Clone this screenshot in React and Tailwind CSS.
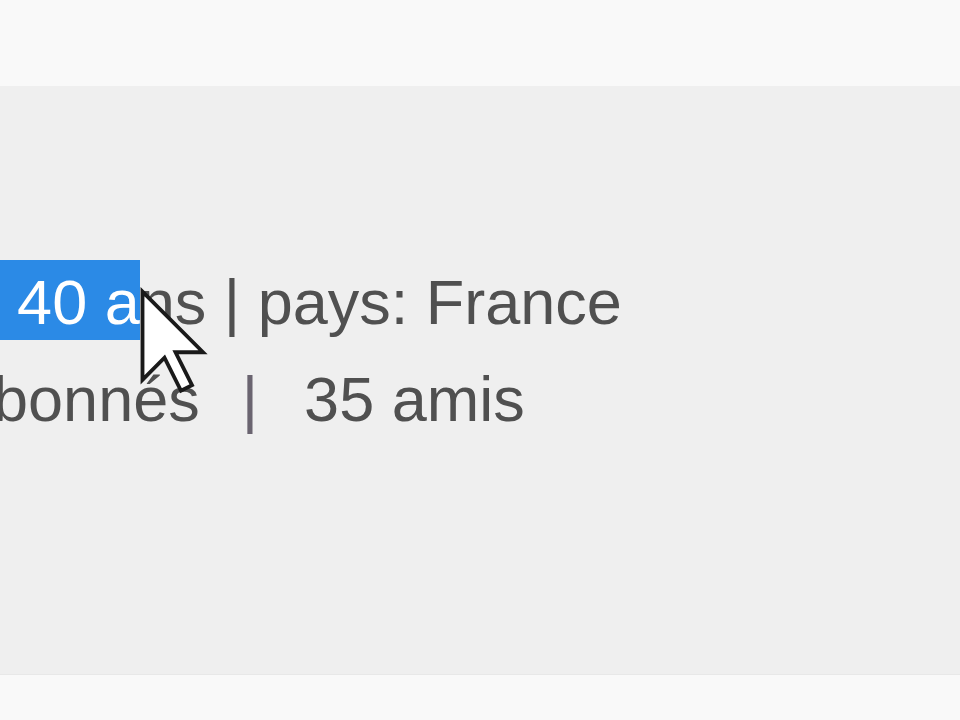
export default function App() {
  return (
    <div className="relative w-[960px] h-[720px] overflow-hidden bg-[#f9f9f9] flex flex-col font-['Liberation_Sans',Arial,sans-serif]">
      <div className="h-[86px] shrink-0 bg-[#f9f9f9]" />
      <div className="h-[589px] shrink-0 bg-[#efefef] border-b border-[#e8e8e8] overflow-hidden pt-[168px] text-[63px] leading-[97px] text-[#505050] blur-[0.7px]">
        <div className="whitespace-nowrap ml-[-123px]">
          <span className="bg-[#2b8ae6] text-white pt-[7px] pb-[3px] pr-0 mr-[-4px]">âge: 40 a</span>
          <span className="ml-[4px]">ns | pays: France</span>
        </div>
        <div className="whitespace-nowrap ml-[-42px] flex items-baseline">
          <span>abonnés</span>
          <span className="ml-[42px] text-[#6a6470]">|</span>
          <span className="ml-[46px]">35 amis</span>
        </div>
      </div>
      <div className="flex-1 bg-[#f9f9f9]" />
      <svg
        className="absolute left-[137px] top-[286px] blur-[0.5px]"
        width="77"
        height="116"
        viewBox="-1 -1 14 21"
      >
        <polygon
          points="0,0 0,16 4,12 7,18 9,17 6,11 11,11"
          fill="#ffffff"
          stroke="#1a1a1a"
          strokeWidth="0.7"
          strokeLinejoin="miter"
        />
      </svg>
    </div>
  );
}
